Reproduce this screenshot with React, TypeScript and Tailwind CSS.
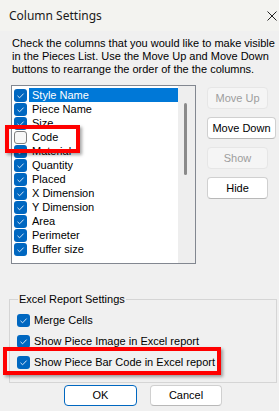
import React from "react";

const items: [string, boolean][] = [
  ["Style Name", true],
  ["Piece Name", true],
  ["Size", true],
  ["Code", false],
  ["Material", true],
  ["Quantity", true],
  ["Placed", true],
  ["X Dimension", true],
  ["Y Dimension", true],
  ["Area", true],
  ["Perimeter", true],
  ["Buffer size", true],
];

function Check({ checked }: { checked: boolean }) {
  return checked ? (
    <span className="flex h-[13px] w-[13px] shrink-0 items-center justify-center rounded-[3px] bg-[#0067c0]">
      <svg width="13" height="13" viewBox="0 0 13 13">
        <path d="M3.5 6.8 L5.6 8.8 L9.6 4.6" fill="none" stroke="#d6e6f7" strokeWidth="1" />
      </svg>
    </span>
  ) : (
    <span className="block h-[13px] w-[13px] shrink-0 rounded-[3px] border border-[#7f7f7f] bg-[#f7f7f7]" />
  );
}

function Btn({ label, enabled, wide }: { label: string; enabled: boolean; wide?: boolean }) {
  return (
    <div
      className={
        "flex h-[22px] items-center justify-center rounded-[4px] border " +
        (wide ? "w-[69px] " : "w-[61px] ") +
        (enabled
          ? "border-[#d0d0d0] border-b-[#b8b8b8] bg-white text-black"
          : "border-[#e6e6e6] bg-[#f5f5f5] text-[#9d9d9d]")
      }
    >
      {label}
    </div>
  );
}

export default function App() {
  return (
    <div className="relative h-[411px] w-[279px] overflow-hidden bg-[#f0f0f0] font-['Liberation_Sans',Arial,sans-serif] text-[11px] text-black">
      <div className="flex h-[31px] items-center justify-between bg-[#f3f3f0] pl-[9px] pr-[1px]">
        <span className="font-['Noto_Sans',sans-serif] text-[12px] text-[#1a1a1a]">Column Settings</span>
        <svg width="10" height="10" viewBox="0 0 10 10" className="mr-[1px]">
          <path d="M0.5 0.5 L9.5 9.5 M9.5 0.5 L0.5 9.5" stroke="#222" strokeWidth="1" />
        </svg>
      </div>

      <div className="ml-[12px] mt-[6px] whitespace-nowrap leading-[13px]">
        Check the columns that you would like to make visible
        <br />
        in the Pieces List. Use the Move Up and Move Down
        <br />
        buttons to rearrange the order of the the columns.
      </div>

      <div className="ml-[11px] mt-[9px] flex">
        <div className="flex h-[179px] w-[185px] border border-[#828790] bg-white">
          <div className="flex-1 pt-[2px]">
            {items.map(([label, checked], i) => (
              <div key={label} className="flex h-[14px] items-center">
                <span className="ml-[2px]">
                  <Check checked={checked} />
                </span>
                <span
                  className={
                    "ml-[2px] flex h-[14px] flex-1 items-center pl-[3px] leading-[14px] " +
                    (i === 0 ? "bg-[#0078d7] text-white" : "")
                  }
                >
                  {label}
                </span>
              </div>
            ))}
          </div>
          <div className="w-[17px] bg-[#eeeeee]">
            <div className="ml-[6px] mt-[17px] h-[72px] w-[3px] rounded-full bg-[#8a8a8a]" />
          </div>
        </div>
        <div className="ml-[11px] mt-[2px] flex flex-col gap-[8px]">
          <Btn label="Move Up" enabled={false} />
          <Btn label="Move Down" enabled wide />
          <Btn label="Show" enabled={false} />
          <Btn label="Hide" enabled />
        </div>
      </div>

      <div className="relative ml-[9px] mr-[2px] mt-[35px] h-[84px] border border-[#d5d5d5]">
        <span className="absolute left-[8px] top-[-7px] bg-[#f0f0f0] px-[1px] leading-[13px]">
          Excel Report Settings
        </span>
        <div className="flex flex-col gap-[7px] pl-[7px] pt-[13px]">
          {["Merge Cells", "Show Piece Image in Excel report", "Show Piece Bar Code in Excel report"].map((t) => (
            <div key={t} className="flex h-[14px] items-center">
              <Check checked />
              <span className="ml-[4px] leading-[14px]">{t}</span>
            </div>
          ))}
        </div>
      </div>

      <div className="ml-[64px] mt-[2px] flex gap-[13px]">
        <div className="flex h-[21px] w-[73px] items-center justify-center rounded-[4px] border border-[#0067c0] bg-white">
          OK
        </div>
        <div className="flex h-[21px] w-[72px] items-center justify-center rounded-[4px] border border-[#d0d0d0] border-b-[#b8b8b8] bg-white">
          Cancel
        </div>
      </div>

      <div className="pointer-events-none absolute left-[5px] top-[125px] h-[28px] w-[75px] border-[4px] border-[#ff0000] shadow-[2px_2px_3px_rgba(0,0,0,0.35)]" />
      <div className="pointer-events-none absolute left-[3px] top-[347px] h-[28px] w-[218px] border-[4px] border-[#ff0000] shadow-[2px_2px_3px_rgba(0,0,0,0.35)]" />
    </div>
  );
}
